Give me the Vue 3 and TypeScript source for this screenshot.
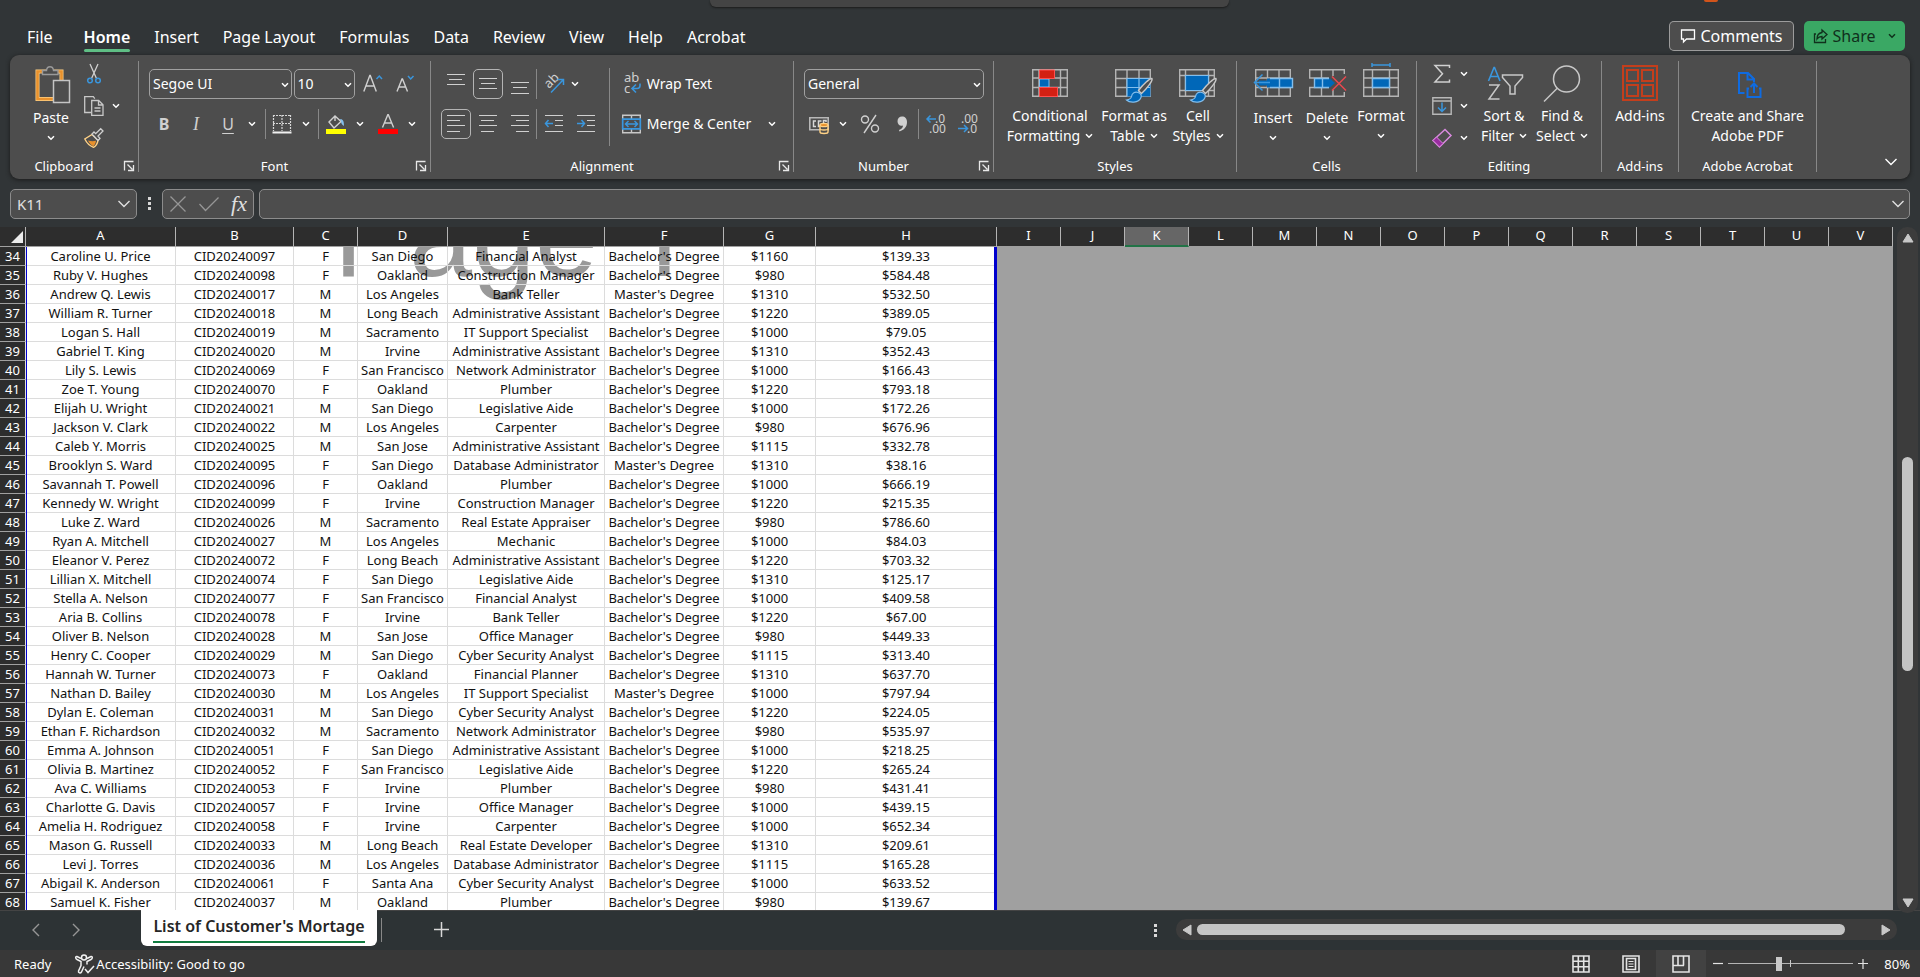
<script setup lang="ts">
import { h, ref } from 'vue'

type Row = [string, string, string, string, string, string, string]

const menu = ['File', 'Home', 'Insert', 'Page Layout', 'Formulas', 'Data', 'Review', 'View', 'Help', 'Acrobat']
const activeMenu = ref('Home')

const columns = 'ABCDEFGHIJKLMNOPQRSTUV'.split('')
const activeColumn = 'K'
const firstRow = 34
const formula = ref('')
const cellName = ref('K11')
const zoom = ref(40)

const B = "Bachelor's Degree"
const M = "Master's Degree"

// name, customer number suffix, sex, city, occupation, income, mortgage
const people: Row[] = [
  ['Caroline U. Price', '097', 'F', 'San Diego', 'Financial Analyst', '$1160', '$139.33'],
  ['Ruby V. Hughes', '098', 'F', 'Oakland', 'Construction Manager', '$980', '$584.48'],
  ['Andrew Q. Lewis', '017', 'M', 'Los Angeles', 'Bank Teller', '$1310', '$532.50'],
  ['William R. Turner', '018', 'M', 'Long Beach', 'Administrative Assistant', '$1220', '$389.05'],
  ['Logan S. Hall', '019', 'M', 'Sacramento', 'IT Support Specialist', '$1000', '$79.05'],
  ['Gabriel T. King', '020', 'M', 'Irvine', 'Administrative Assistant', '$1310', '$352.43'],
  ['Lily S. Lewis', '069', 'F', 'San Francisco', 'Network Administrator', '$1000', '$166.43'],
  ['Zoe T. Young', '070', 'F', 'Oakland', 'Plumber', '$1220', '$793.18'],
  ['Elijah U. Wright', '021', 'M', 'San Diego', 'Legislative Aide', '$1000', '$172.26'],
  ['Jackson V. Clark', '022', 'M', 'Los Angeles', 'Carpenter', '$980', '$676.96'],
  ['Caleb Y. Morris', '025', 'M', 'San Jose', 'Administrative Assistant', '$1115', '$332.78'],
  ['Brooklyn S. Ward', '095', 'F', 'San Diego', 'Database Administrator', '$1310', '$38.16'],
  ['Savannah T. Powell', '096', 'F', 'Oakland', 'Plumber', '$1000', '$666.19'],
  ['Kennedy W. Wright', '099', 'F', 'Irvine', 'Construction Manager', '$1220', '$215.35'],
  ['Luke Z. Ward', '026', 'M', 'Sacramento', 'Real Estate Appraiser', '$980', '$786.60'],
  ['Ryan A. Mitchell', '027', 'M', 'Los Angeles', 'Mechanic', '$1000', '$84.03'],
  ['Eleanor V. Perez', '072', 'F', 'Long Beach', 'Administrative Assistant', '$1220', '$703.32'],
  ['Lillian X. Mitchell', '074', 'F', 'San Diego', 'Legislative Aide', '$1310', '$125.17'],
  ['Stella A. Nelson', '077', 'F', 'San Francisco', 'Financial Analyst', '$1000', '$409.58'],
  ['Aria B. Collins', '078', 'F', 'Irvine', 'Bank Teller', '$1220', '$67.00'],
  ['Oliver B. Nelson', '028', 'M', 'San Jose', 'Office Manager', '$980', '$449.33'],
  ['Henry C. Cooper', '029', 'M', 'San Diego', 'Cyber Security Analyst', '$1115', '$313.40'],
  ['Hannah W. Turner', '073', 'F', 'Oakland', 'Financial Planner', '$1310', '$637.70'],
  ['Nathan D. Bailey', '030', 'M', 'Los Angeles', 'IT Support Specialist', '$1000', '$797.94'],
  ['Dylan E. Coleman', '031', 'M', 'San Diego', 'Cyber Security Analyst', '$1220', '$224.05'],
  ['Ethan F. Richardson', '032', 'M', 'Sacramento', 'Network Administrator', '$980', '$535.97'],
  ['Emma A. Johnson', '051', 'F', 'San Diego', 'Administrative Assistant', '$1000', '$218.25'],
  ['Olivia B. Martinez', '052', 'F', 'San Francisco', 'Legislative Aide', '$1220', '$265.24'],
  ['Ava C. Williams', '053', 'F', 'Irvine', 'Plumber', '$980', '$431.41'],
  ['Charlotte G. Davis', '057', 'F', 'Irvine', 'Office Manager', '$1000', '$439.15'],
  ['Amelia H. Rodriguez', '058', 'F', 'Irvine', 'Carpenter', '$1000', '$652.34'],
  ['Mason G. Russell', '033', 'M', 'Long Beach', 'Real Estate Developer', '$1310', '$209.61'],
  ['Levi J. Torres', '036', 'M', 'Los Angeles', 'Database Administrator', '$1115', '$165.28'],
  ['Abigail K. Anderson', '061', 'F', 'Santa Ana', 'Cyber Security Analyst', '$1000', '$633.52'],
  ['Samuel K. Fisher', '037', 'M', 'Oakland', 'Plumber', '$980', '$139.67'],
]
const masters = new Set([36, 45, 57])
const rows = people.map(([name, id, sex, city, job, income, mortgage], i) => {
  const number = firstRow + i
  return { number, cells: [name, 'CID20240' + id, sex, city, job, masters.has(number) ? M : B, income, mortgage] }
})

const Chevron = () =>
  h('svg', { width: 8, height: 6, viewBox: '0 0 8 6', 'aria-hidden': 'true' }, [
    h('path', { d: 'M1 1.2l3 3 3-3', fill: 'none', stroke: 'currentColor', 'stroke-width': 1.5 }),
  ])
const WideChevron = () =>
  h('svg', { width: 14, height: 8, viewBox: '0 0 14 8', 'aria-hidden': 'true' }, [
    h('path', { d: 'M1.5 1l5.5 5.5L12.5 1', fill: 'none', stroke: 'currentColor', 'stroke-width': 1.4 }),
  ])
const Launcher = () =>
  h('svg', { width: 12, height: 12, viewBox: '0 0 12 12', 'aria-hidden': 'true' }, [
    h('path', { d: 'M1.5 10.5V1.5h9M4.5 4.5l5 5M10.5 5v5.500H5', fill: 'none', stroke: '#e8e8e8', 'stroke-width': 1.3 }),
  ])
// Horizontal strokes given as [x1, x2, y]
const Lines = (props: { lines: number[][] }) =>
  h('svg', { width: 20, height: 20, viewBox: '0 0 20 20', 'aria-hidden': 'true' }, [
    h('path', { d: props.lines.map(([a, b, y]) => `M${a} ${y}H${b}`).join(''), stroke: '#d0d0d0', 'stroke-width': 1.2 }),
  ])
Lines.props = ['lines']
const Brush = () =>
  h('g', [
    h('path', { d: 'M38 14.5c-2-.5-9 6-13.5 12l3 3C33 24.5 39 16.5 38 14.5z', fill: '#4d4d4d', stroke: '#c8c8c8', 'stroke-width': 1.4 }),
    h('path', { d: 'M24 28.5c-3-1-6 .5-6.5 4-.4 2-2 3-5 3.500 3 3 12 3.500 14.500-2.500.8-2-.5-4-3-5z', fill: '#0067b8', stroke: '#83beec', 'stroke-width': 1.2 }),
  ])
</script>

<template>
  <div class="app">
    <header class="top">
      <div class="search" />
      <div class="avatar" />
      <nav class="menu">
        <button
          v-for="item in menu"
          :key="item"
          type="button"
          :class="{ active: item === activeMenu }"
          @click="activeMenu = item"
        >{{ item }}</button>
      </nav>
      <div class="actions">
        <button type="button" class="comments">
          <svg width="16" height="16" viewBox="0 0 16 16"><path d="M1.500 2h13v9H6.500L3.500 14v-3h-2z" fill="none" stroke="#fff" stroke-width="1.300" /></svg>
          Comments
        </button>
        <button type="button" class="share">
          <svg width="16" height="16" viewBox="0 0 16 16"><path d="M3 6H1.500v8.500h11V11M9 2l5 4.500L9 11V8.500C6.500 8.500 5 9.500 4 11c0-3.500 2-6 5-6.500z" fill="none" stroke="#10301c" stroke-width="1.300" /></svg>
          <span>Share</span>
          <Chevron />
        </button>
      </div>
    </header>

    <section class="ribbon">
      <div class="group clipboard">
        <div class="body start">
          <button type="button" class="big paste low">
            <svg width="40" height="40" viewBox="0 0 40 40">
              <path d="M6.500 7.500h24V35h-24z" fill="none" stroke="#ffd286" stroke-width="4" />
              <path d="M6.500 7.500h24V35h-24z" fill="none" stroke="#e8912d" stroke-width="2.600" />
              <path d="M11.500 10.500v-4h4c.5-5 6.500-5 7 0h4.500v4z" fill="#4d4d4d" stroke="#9a9a9a" stroke-width="1.400" />
              <path d="M22.500 16.500h16v22h-16z" fill="#4d4d4d" stroke="#c4c4c4" stroke-width="1.500" />
            </svg>
            <span>Paste</span><span><Chevron /></span>
          </button>
          <div class="mini">
            <button type="button" aria-label="Cut">
              <svg width="20" height="20" viewBox="0 0 20 20"><path d="M6 0l6.500 14.500M14 0L7.500 14.500" stroke="#d0d0d0" stroke-width="1.300" /><circle cx="6" cy="16.500" r="2.300" fill="none" stroke="#3a96dd" stroke-width="1.500" /><circle cx="14" cy="16.500" r="2.300" fill="none" stroke="#3a96dd" stroke-width="1.500" /></svg>
            </button>
            <button type="button" aria-label="Copy">
              <svg width="20" height="20" viewBox="0 0 20 20"><path d="M7 16.500H.7V.7h8.600l1.500 2M7.700 4.500h7l4.300 4.300v10.500H7.700zM14.500 4.500V9H19M10.500 12h6M10.500 15h6" fill="none" stroke="#c8c8c8" stroke-width="1.300" /></svg>
              <Chevron />
            </button>
            <button type="button" aria-label="Format Painter">
              <svg width="20" height="20" viewBox="0 0 20 20"><path d="M8 6.500L.8 11c2 4 5 7 8.700 8.300 3-1.500 4-4 4.500-7z" fill="#4d4d4d" stroke="#ffd286" stroke-width="1.400" /><path d="M4 12.500c3 1 5.500 1 8 .3-.3 2.500-1.300 4.500-2.700 5.500C7 17 5 15 4 12.500z" fill="#e8912d" /><path d="M8 6l6 6.500 2-2-2-2.500 5-5-2.300-2.300-5 5L10 4z" fill="#4d4d4d" stroke="#d0d0d0" stroke-width="1.300" /></svg>
            </button>
          </div>
        </div>
        <div class="label tucked">Clipboard<button type="button" aria-label="Clipboard options"><Launcher /></button></div>
      </div>

      <div class="group font">
        <div class="body rows">
          <div class="row">
            <span class="combo wide"><select aria-label="Font"><option>Segoe UI</option></select><Chevron /></span>
            <span class="combo"><select aria-label="Font size"><option>10</option></select><Chevron /></span>
            <button type="button" class="w32" aria-label="Increase font size">
              <svg width="20" height="20" viewBox="0 0 20 20"><path d="M.8 17.500L6.800 1.500h.5l6 16M3 12h8" fill="none" stroke="#d0d0d0" stroke-width="1.400" /><path d="M13.500 5L16.300 2 19 5" fill="none" stroke="#3a96dd" stroke-width="1.500" /></svg>
            </button>
            <button type="button" class="w32" aria-label="Decrease font size">
              <svg width="20" height="20" viewBox="0 0 20 20"><path d="M2 17.500L7 5h.5l5 12.500M4 13h7" fill="none" stroke="#d0d0d0" stroke-width="1.400" /><path d="M13 2l2.700 3L18.500 2" fill="none" stroke="#3a96dd" stroke-width="1.500" /></svg>
            </button>
          </div>
          <div class="row">
            <button type="button" class="w32 glyph bold">B</button>
            <button type="button" class="w32 glyph italic">I</button>
            <button type="button" class="w32 glyph under">U</button>
            <button type="button" class="w16" aria-label="Underline style"><Chevron /></button>
            <i class="bar roomy" />
            <button type="button" class="w24" aria-label="Borders">
              <svg width="20" height="20" viewBox="0 0 20 20"><path d="M1 1.500h18M1 9.500h18M1.500 1v16M10 1v16M18.500 1v16" stroke="#d8d8d8" stroke-width="1.200" stroke-dasharray="2 1" /><path d="M.5 18.500h19" stroke="#f0f0f0" stroke-width="2" /></svg>
            </button>
            <button type="button" class="w24" aria-label="Border style"><Chevron /></button>
            <i class="bar" />
            <button type="button" class="w32" aria-label="Fill color">
              <svg width="20" height="20" viewBox="0 0 20 20"><path d="M3 8l6-6 6 5.500-7 6.500zM9 2v5" fill="none" stroke="#d0d0d0" stroke-width="1.400" /><path d="M14 5c3 0 4 2 4 7-2-1-3-3-3-5z" fill="#83beec" /><path d="M0 15h20v5H0z" fill="#ff0" /></svg>
            </button>
            <button type="button" class="w16" aria-label="Fill colors"><Chevron /></button>
            <button type="button" class="w32 spaced" aria-label="Font color">
              <svg width="20" height="20" viewBox="0 0 20 20"><path d="M4.500 13.500L9.800.8h.5l5.300 12.700M6.500 9h7" fill="none" stroke="#d0d0d0" stroke-width="1.400" /><path d="M0 15h20v5H0z" fill="red" /></svg>
            </button>
            <button type="button" class="w16" aria-label="Font colors"><Chevron /></button>
          </div>
        </div>
        <div class="label tucked">Font<button type="button" aria-label="Font options"><Launcher /></button></div>
      </div>

      <div class="group alignment">
        <div class="body">
          <div class="rows left">
            <div class="row">
              <button type="button" class="w32" aria-label="Top align"><Lines :lines="[[1, 19, 0.5], [3, 16, 5.5], [1, 19, 10.5]]" /></button>
              <button type="button" class="w32 on" aria-label="Middle align"><Lines :lines="[[1, 19, 4.5], [3, 17, 9.5], [1, 19, 14.5]]" /></button>
              <button type="button" class="w32" aria-label="Bottom align"><Lines :lines="[[1, 19, 8.5], [3, 17, 13.5], [1, 19, 19.5]]" /></button>
              <i class="bar" />
              <button type="button" class="w32" aria-label="Orientation">
                <svg width="20" height="20" viewBox="0 0 20 20"><text transform="translate(5 15) rotate(-45)" font-size="13" fill="#d0d0d0">ab</text><path d="M7 18.500L19 6M13.500 5.500H19.500V11" fill="none" stroke="#3a96dd" stroke-width="1.500" /></svg>
              </button>
              <button type="button" class="w10" aria-label="Orientation options"><Chevron /></button>
            </div>
            <div class="row">
              <button type="button" class="w32 on" aria-label="Align left"><Lines :lines="[[1, 19, 1.5], [1, 14, 6.5], [1, 19, 11.5], [1, 14, 17.5]]" /></button>
              <button type="button" class="w32" aria-label="Center"><Lines :lines="[[1, 19, 1.5], [3, 16, 6.5], [1, 19, 11.5], [3, 16, 17.5]]" /></button>
              <button type="button" class="w32" aria-label="Align right"><Lines :lines="[[1, 19, 1.5], [6, 19, 6.5], [1, 19, 11.5], [6, 19, 17.5]]" /></button>
              <i class="bar" />
              <button type="button" class="w32" aria-label="Decrease indent">
                <svg width="20" height="20" viewBox="0 0 20 20"><path d="M1 1.500h18M11 6.500h8M11 11.500h8M1 17.500h18" stroke="#d0d0d0" stroke-width="1.200" /><path d="M9 9.500H1.500M4.500 6L1.500 9.500l3 3.500" fill="none" stroke="#3a96dd" stroke-width="1.500" /></svg>
              </button>
              <button type="button" class="w32" aria-label="Increase indent">
                <svg width="20" height="20" viewBox="0 0 20 20"><path d="M1 1.500h18M11 6.500h8M11 11.500h8M1 17.500h18" stroke="#d0d0d0" stroke-width="1.200" /><path d="M1 9.500h7.500M5.500 6l3 3.500-3 3.500" fill="none" stroke="#3a96dd" stroke-width="1.500" /></svg>
              </button>
            </div>
          </div>
          <div class="rows right">
            <div class="row">
              <button type="button" class="text">
                <svg width="24" height="22" viewBox="0 0 24 22"><text x="4" y="9" font-size="13" fill="#d0d0d0">ab</text><text x="4" y="20" font-size="13" fill="#d0d0d0">c</text><path d="M20 10.500v2q0 3-3 3h-4.500M16 11.500l-4 4 4 4" fill="none" stroke="#3a96dd" stroke-width="1.600" /></svg>
                Wrap Text
              </button>
            </div>
            <div class="row">
              <button type="button" class="text">
                <svg width="24" height="20" viewBox="0 0 24 20"><path d="M2.700 1.200h17.600v17.600H2.700zM11.500 1v4M11.500 15v4" fill="none" stroke="#c8c8c8" stroke-width="1.400" /><path d="M2.700 5.200h17.600v9.600H2.700z" fill="#4d4d4d" stroke="#3a96dd" stroke-width="1.700" /><path d="M6 10h11M8.500 7L5.500 10l3 3M14.500 7l3 3-3 3" fill="none" stroke="#3a96dd" stroke-width="1.500" /></svg>
                Merge &amp; Center
              </button>
              <button type="button" class="w24 push" aria-label="Merge options"><Chevron /></button>
            </div>
          </div>
        </div>
        <div class="label tucked">Alignment<button type="button" aria-label="Alignment options"><Launcher /></button></div>
      </div>

      <div class="group number">
        <div class="body rows">
          <div class="row">
            <span class="combo full"><select aria-label="Number format"><option>General</option></select><Chevron /></span>
          </div>
          <div class="row">
            <button type="button" class="w32" aria-label="Accounting format">
              <svg width="20" height="20" viewBox="0 0 20 20"><path d="M.8 3.800h18.400v12H.8z" fill="none" stroke="#b8b8b8" stroke-width="1.600" /><path d="M7 7H4.500v5.500H7M12.500 7H9.500v5.500h2M17 8V6.500h-2.500V9" fill="none" stroke="#d8d8d8" stroke-width="1.500" /><path d="M11 11v7c0 2 8 2 8 0v-7" fill="#4d4d4d" stroke="#ffd286" stroke-width="1.400" /><ellipse cx="15" cy="11" rx="4" ry="1.700" fill="#e8912d" stroke="#ffd286" stroke-width="1.300" /><path d="M11 14.500c0 2 8 2 8 0" fill="none" stroke="#ffd286" stroke-width="1.300" /></svg>
            </button>
            <button type="button" class="w16" aria-label="Currencies"><Chevron /></button>
            <button type="button" class="w32" aria-label="Percent style">
              <svg width="20" height="20" viewBox="0 0 20 20"><path d="M16 1L4 19" stroke="#d0d0d0" stroke-width="1.400" /><circle cx="5" cy="5.500" r="3.500" fill="none" stroke="#d0d0d0" stroke-width="1.400" /><circle cx="15" cy="14.500" r="3.500" fill="none" stroke="#d0d0d0" stroke-width="1.400" /></svg>
            </button>
            <button type="button" class="w32" aria-label="Comma style">
              <svg width="20" height="20" viewBox="0 0 20 20"><path d="M10 2.500c3 0 5 2 5 5.500 0 5-3 8-7.500 9.500L7 16c2.500-1 4-2.500 4-4.500-3 1-5.500-1-5.500-4.300 0-2.800 2-4.700 4.500-4.700z" fill="#d0d0d0" /></svg>
            </button>
            <i class="bar" />
            <button type="button" class="w32" aria-label="Increase decimal">
              <svg width="22" height="20" viewBox="0 0 22 20"><text x="10" y="9" font-size="12" fill="#d0d0d0">.0</text><text x="4" y="19" font-size="12" fill="#d0d0d0">.00</text><path d="M11 5H2M5.500 1.500L2 5l3.500 3.500" fill="none" stroke="#3a96dd" stroke-width="1.500" /></svg>
            </button>
            <button type="button" class="w32" aria-label="Decrease decimal">
              <svg width="22" height="20" viewBox="0 0 22 20"><text x="4" y="9" font-size="12" fill="#d0d0d0">.00</text><text x="10" y="19" font-size="12" fill="#d0d0d0">.0</text><path d="M1 14.500h9M7 11l3.500 3.500L7 18" fill="none" stroke="#3a96dd" stroke-width="1.500" /></svg>
            </button>
          </div>
        </div>
        <div class="label tucked">Number<button type="button" aria-label="Number options"><Launcher /></button></div>
      </div>

      <div class="group styles">
        <div class="body start">
          <button type="button" class="big cond">
            <svg width="40" height="40" viewBox="0 0 40 40"><path d="M2.700 5.700h34.600v26.600H2.700zM2 14h36M2 23.500h36M9 5v28M30.500 5v28" fill="none" stroke="#b4b4b4" stroke-width="1.400" /><path d="M9.500 15h9.500v8H9.500z" fill="#0067b8" stroke="#83beec" /><path d="M9.500 6H24.500v8.500h-15zM9.500 23.500h18v9h-18z" fill="#d32013" stroke="#ff5050" /></svg>
            <span>Conditional</span><span>Formatting <Chevron /></span>
          </button>
          <button type="button" class="big table">
            <svg width="40" height="40" viewBox="0 0 40 40"><path d="M1.700 5.700h34.600v26.600H1.700zM1 14.500h36M1 23.500h36M13 5v28M25 5v28" fill="none" stroke="#b4b4b4" stroke-width="1.400" /><path d="M13 14.500h23.500v18H13z" fill="#0067b8" /><path d="M13 23.500h23M13 32.500V14.500h23M25 14.500v18" fill="none" stroke="#83beec" stroke-width="1.200" /><Brush /></svg>
            <span>Format as</span><span>Table <Chevron /></span>
          </button>
          <button type="button" class="big cell">
            <svg width="40" height="40" viewBox="0 0 40 40"><path d="M1.700 5.700h34.600v26.600H1.700zM1 11.500h36M1 26.500h36M7.500 5v28M30.500 5v28" fill="none" stroke="#b4b4b4" stroke-width="1.400" /><path d="M7.500 11.500h23v15h-23z" fill="#0067b8" stroke="#83beec" stroke-width="1.200" /><Brush /></svg>
            <span>Cell</span><span>Styles <Chevron /></span>
          </button>
        </div>
        <div class="label">Styles</div>
      </div>

      <div class="group cells">
        <div class="body start">
          <button type="button" class="big w54 low">
            <svg width="40" height="40" viewBox="0 0 40 40"><path d="M2.700 5.700h34.600v26.600H2.700zM2 14h36M2 23.500h36M14.500 5v28M26 5v28" fill="none" stroke="#b4b4b4" stroke-width="1.400" /><path d="M14 14.500h25.500v9H14v-2H6v-5h8z" fill="#0067b8" /><path d="M17 14.500h22.500v9H17M26.500 14v10" fill="none" stroke="#83beec" stroke-width="1.400" /><path d="M17 18.500H1.500M9.500 10.500l-8 8 8 8" fill="none" stroke="#3a96dd" stroke-width="1.500" /></svg>
            <span>Insert</span><span><Chevron /></span>
          </button>
          <button type="button" class="big w54 low">
            <svg width="40" height="40" viewBox="0 0 40 40"><path d="M2.700 14V5.700h34.600V10M2 14h20M2.700 23.500v8.800h34.600V28M2 23.500h20M14.500 5v28M26 5v7M26 26v7" fill="none" stroke="#b4b4b4" stroke-width="1.400" /><path d="M7.500 14.500H23l5 4.500-5 4.500H7.500z" fill="#0067b8" /><path d="M22 14.500H7.500v9H22M15.500 14v10" fill="none" stroke="#83beec" stroke-width="1.400" /><path d="M25 12.500l14 14M39 12.500l-14 14" stroke="#e8484f" stroke-width="1.500" /></svg>
            <span>Delete</span><span><Chevron /></span>
          </button>
          <button type="button" class="big w54">
            <svg width="40" height="40" viewBox="0 0 40 40"><path d="M2.700 5.700h34.600v26.600H2.700zM2 14h36M2 23.500h36M11.500 5v28M28.500 5v28" fill="none" stroke="#b4b4b4" stroke-width="1.400" /><path d="M11.500 14.500h17v9h-17z" fill="#0067b8" stroke="#83beec" stroke-width="1.400" /><path d="M11 1h18M11 -1v4M29 -1v4" stroke="#3a96dd" stroke-width="1.500" /></svg>
            <span>Format</span><span><Chevron /></span>
          </button>
        </div>
        <div class="label">Cells</div>
      </div>

      <div class="group editing">
        <div class="body start">
          <div class="mini">
            <button type="button" aria-label="AutoSum">
              <svg width="20" height="20" viewBox="0 0 20 20"><path d="M17.500 4V1.500H3l7.500 8.300L3 18h14.500v-2.500" fill="none" stroke="#d0d0d0" stroke-width="1.500" /></svg>
              <Chevron />
            </button>
            <button type="button" aria-label="Fill">
              <svg width="20" height="20" viewBox="0 0 20 20"><path d="M.8 1.800h18.400v16.400H.8zM1 5h18" fill="none" stroke="#b8b8b8" stroke-width="1.400" /><path d="M10 6.500v9M6 11.500l4 4 4-4" fill="none" stroke="#3a96dd" stroke-width="1.500" /></svg>
              <Chevron />
            </button>
            <button type="button" aria-label="Clear">
              <svg width="20" height="20" viewBox="0 0 20 20"><path d="M13 1.500L19 7.500 7.500 19 1 12.500z" fill="none" stroke="#d98ade" stroke-width="1.500" /><path d="M4.500 9l6.500 6.500L7.500 19 1 12.500z" fill="#992da0" stroke="#d98ade" /></svg>
              <Chevron />
            </button>
          </div>
          <button type="button" class="big w58">
            <svg width="40" height="40" viewBox="0 0 40 40"><path d="M4.500 17L10 3.500h.5L16 17M6.500 12.500h7.500" fill="none" stroke="#3a96dd" stroke-width="1.600" /><path d="M5 21h10L5 35h10.500M18.500 11h20v2.500l-7.500 8.500v8h-5v-8l-7.500-8.500z" fill="none" stroke="#c8c8c8" stroke-width="1.500" /></svg>
            <span>Sort &amp;</span><span>Filter <Chevron /></span>
          </button>
          <button type="button" class="big w58">
            <svg width="40" height="40" viewBox="0 0 40 40"><circle cx="24.500" cy="15" r="13" fill="none" stroke="#c8c8c8" stroke-width="1.500" /><path d="M15.500 24L2 37.500" stroke="#c8c8c8" stroke-width="1.500" /></svg>
            <span>Find &amp;</span><span>Select <Chevron /></span>
          </button>
        </div>
        <div class="label">Editing</div>
      </div>

      <div class="group addins">
        <div class="body">
          <button type="button" class="big">
            <svg width="40" height="40" viewBox="0 0 40 40"><path d="M3 2h34v34H3zM7 6h11v11H7zM22 6h11v11H22zM7 21h11v11H7zM22 21h11v11H22z" fill="none" stroke="#c43e1c" stroke-width="2" /></svg>
            <span>Add-ins</span>
          </button>
        </div>
        <div class="label">Add-ins</div>
      </div>

      <div class="group adobe">
        <div class="body">
          <button type="button" class="big">
            <svg width="40" height="40" viewBox="0 0 40 40"><path d="M17.500 29h-5.500V9h9l6 6v3M20.500 9v6.500H27M22 24.500h-1.500v8.500h13v-8.500H32M27 29V20M23.500 23l3.500-3.500 3.500 3.500" fill="none" stroke="#0f6be0" stroke-width="2" /></svg>
            <span>Create and Share</span><span>Adobe PDF</span>
          </button>
        </div>
        <div class="label">Adobe Acrobat</div>
      </div>

      <button type="button" class="collapse" aria-label="Collapse ribbon"><WideChevron /></button>
    </section>

    <section class="formula">
      <div class="box name">
        <input v-model="cellName" type="text" aria-label="Cell name">
        <WideChevron />
      </div>
      <svg class="dots" width="4" height="14" viewBox="0 0 4 14"><path d="M0 0h3v3H0zM0 5h3v3H0zM0 10h3v3H0z" fill="#d8d8d8" /></svg>
      <div class="box tools">
        <button type="button" aria-label="Cancel"><svg width="18" height="18" viewBox="0 0 18 18"><path d="M1.500 1.500l15 15M16.500 1.500l-15 15" stroke="#969696" stroke-width="1.300" /></svg></button>
        <button type="button" aria-label="Enter"><svg width="22" height="18" viewBox="0 0 22 18"><path d="M1.500 9l6 6.500L20.500 2.500" fill="none" stroke="#969696" stroke-width="1.300" /></svg></button>
        <button type="button" class="fx">fx</button>
      </div>
      <div class="box entry">
        <input v-model="formula" type="text" aria-label="Formula">
        <WideChevron />
      </div>
    </section>

    <main class="sheet">
      <div class="grid">
        <div class="page"><span>Page <b>1</b></span></div>
        <table>
          <colgroup>
            <col class="c0"><col class="ca"><col class="cb"><col class="cc"><col class="cd"><col class="ce"><col class="cf"><col class="cg"><col class="ch">
            <col v-for="n in 14" :key="n" class="cx">
          </colgroup>
          <thead>
            <tr>
              <th class="corner"><svg width="12" height="12" viewBox="0 0 12 12"><path d="M12 0v12H0z" fill="#ececec" /></svg></th>
              <th v-for="c in columns" :key="c" :class="{ current: c === activeColumn }">{{ c }}</th>
            </tr>
          </thead>
          <tbody>
            <tr v-for="row in rows" :key="row.number">
              <th>{{ row.number }}</th>
              <td v-for="(cell, i) in row.cells" :key="i">{{ cell }}</td>
              <td colspan="14" class="outside" />
            </tr>
          </tbody>
        </table>
        <div class="edge" />
      </div>
      <div class="vscroll">
        <svg width="12" height="10" viewBox="0 0 12 10"><path d="M6 1l5 8H1z" fill="#c8c8c8" stroke="#c8c8c8" stroke-linejoin="round" /></svg>
        <div class="vtrack"><div class="vthumb" /></div>
        <svg width="12" height="10" viewBox="0 0 12 10"><path d="M6 9l5-8H1z" fill="#c8c8c8" stroke="#c8c8c8" stroke-linejoin="round" /></svg>
      </div>
    </main>

    <footer>
      <div class="tabs">
        <div class="arrows">
          <button type="button" aria-label="Previous sheet"><svg width="8" height="14" viewBox="0 0 8 14"><path d="M7 1L1 7l6 6" fill="none" stroke="#969696" stroke-width="1.400" /></svg></button>
          <button type="button" aria-label="Next sheet"><svg width="8" height="14" viewBox="0 0 8 14"><path d="M1 1l6 6-6 6" fill="none" stroke="#969696" stroke-width="1.400" /></svg></button>
        </div>
        <button type="button" class="tab"><span>List of Customer's Mortage</span></button>
        <i class="bar" />
        <button type="button" class="add" aria-label="New sheet"><svg width="15" height="15" viewBox="0 0 15 15"><path d="M7.500 0v15M0 7.500h15" stroke="#d8d8d8" stroke-width="1.500" /></svg></button>
        <svg class="dots" width="4" height="14" viewBox="0 0 4 14"><path d="M0 0h3v3H0zM0 5h3v3H0zM0 10h3v3H0z" fill="#d8d8d8" /></svg>
        <div class="hscroll">
          <svg width="10" height="12" viewBox="0 0 10 12"><path d="M1 6l8-5v10z" fill="#c8c8c8" stroke="#c8c8c8" stroke-linejoin="round" /></svg>
          <div class="htrack"><div class="hthumb" /></div>
          <svg width="10" height="12" viewBox="0 0 10 12"><path d="M9 6L1 1v10z" fill="#c8c8c8" stroke="#c8c8c8" stroke-linejoin="round" /></svg>
        </div>
      </div>
      <div class="status">
        <span>Ready</span>
        <button type="button" class="access">
          <svg width="20" height="20" viewBox="0 0 20 20"><path d="M6 4.500L2 2.500C0 2 .5 5 2 5.500l4 2v4L3.500 17c-.5 2 2 2.500 3 1L9 12.500M12 4.500l4-2c2-.5 1.500 2.500 0 3l-4 2v3M10 15l3 3.500 6-6.500" fill="none" stroke="#f0f0f0" stroke-width="1.500" /><circle cx="9" cy="3.500" r="2.500" fill="none" stroke="#f0f0f0" stroke-width="1.500" /></svg>
          Accessibility: Good to go
        </button>
        <div class="views">
          <button type="button" aria-label="Normal view"><svg width="18" height="18" viewBox="0 0 18 18"><path d="M1 1h16v16H1zM6.300 1v16M11.700 1v16M1 6.300h16M1 11.700h16" fill="none" stroke="#e4e4e4" stroke-width="1.600" /></svg></button>
          <button type="button" aria-label="Page layout view"><svg width="18" height="18" viewBox="0 0 18 18"><path d="M1 1h16v16H1zM4.500 3.500h9v11h-9z" fill="none" stroke="#e4e4e4" stroke-width="1.600" /><path d="M6.500 6.500h5M6.500 9h5M6.500 11.500h5" stroke="#e4e4e4" stroke-width="1.200" /></svg></button>
          <button type="button" class="on" aria-label="Page break preview"><svg width="18" height="18" viewBox="0 0 18 18"><path d="M1 1h16v16H1zM6 1v9.500M11.500 1v9.500M1 10.500h11" fill="none" stroke="#e4e4e4" stroke-width="1.600" /></svg></button>
        </div>
        <button type="button" class="w20" aria-label="Zoom out"><svg width="10" height="10" viewBox="0 0 10 10"><path d="M0 4.500h10" stroke="#e4e4e4" stroke-width="1.200" /></svg></button>
        <div class="slider"><input v-model="zoom" type="range" min="0" max="100" aria-label="Zoom"></div>
        <button type="button" class="w20" aria-label="Zoom in"><svg width="10" height="10" viewBox="0 0 10 10"><path d="M0 4.500h10M5 0v10" stroke="#e4e4e4" stroke-width="1.200" /></svg></button>
        <span class="percent">80%</span>
      </div>
    </footer>
  </div>
</template>

<style>
body { background: #313537; }
</style>

<style scoped>
.app {
  display: flex; flex-direction: column; height: 100vh; overflow: hidden;
  background: #313537; color: #fff;
  font: 14px/20px "Noto Sans", "Open Sans", sans-serif;
}
button, input, select { font: inherit; color: inherit; background: none; border: 0; padding: 0; margin: 0; }
button { display: flex; align-items: center; justify-content: center; white-space: nowrap; }
svg { display: block; flex: none; overflow: visible; }

.top { position: relative; display: flex; justify-content: space-between; height: 55px; flex: none; }
.search { position: absolute; top: 0; left: 37%; right: 36%; height: 7px; background: #444; border-radius: 0 0 6px 6px; box-shadow: 0 1px 2px #1c1c1c; }
.avatar { position: absolute; top: 0; right: 202px; width: 14px; height: 2px; background: #d2541b; border-radius: 0 0 7px 7px; }
.menu { display: flex; align-items: flex-end; padding: 0 0 3px 15px; }
.menu button { position: relative; height: 34px; padding: 4px 12px 0; font-size: 16px; }
.menu button:first-child { margin-right: 7px; }
.menu .active { font-weight: 600; }
.menu .active::after { content: ""; position: absolute; left: 12px; right: 12px; bottom: 0; height: 3px; border-radius: 2px; background: #5fbf85; }
.actions { display: flex; gap: 10px; padding: 21px 15px 4px 0; }
.actions button { height: 30px; border-radius: 5px; font-size: 16px; gap: 4px; }
.comments { width: 125px; background: #4d4d4d; box-shadow: inset 0 0 0 1px #9c9c9c; }
.actions .share { width: 101px; background: #3aa864; color: #10301c; }
.share span { margin-right: 9px; }

.ribbon {
  display: flex; flex: none; height: 111px; margin: 0 10px; padding: 6px 0 7px;
  background: #4d4d4d; border-radius: 9px; box-shadow: 0 1px 4px #1a1a1a;
}
.group { display: flex; flex-direction: column; flex: none; border-right: 1px solid #888; box-sizing: border-box; }
.clipboard { width: 129px; }
.font { width: 292px; }
.alignment { width: 363px; }
.number { width: 200px; }
.styles { width: 243px; }
.cells { width: 180px; }
.editing { width: 185px; }
.addins { width: 77px; }
.adobe { width: 138px; }
.body { display: flex; flex: 1; justify-content: center; }
.body.start { justify-content: flex-start; }
.rows { display: flex; flex-direction: column; justify-content: flex-start; gap: 10px; padding: 8px 9px 0; }
.row { display: flex; align-items: center; height: 30px; }
.label { position: relative; height: 14px; font-size: 13px; line-height: 16px; text-align: center; }
.label.tucked { padding-right: 20px; }
.label button { position: absolute; right: 3px; top: 2px; }

.w10 { width: 10px; }
.w16 { width: 16px; }
.w20 { width: 20px; }
.w24 { width: 24px; }
.w32 { width: 32px; }
.w54 { width: 54px; }
.w58 { width: 58px; }
.row button { height: 30px; flex: none; }
.row .text { flex: none; }
.spaced { margin-left: 4px; }
.bar { width: 1px; height: 30px; background: #888; flex: none; margin-right: 1px; }
.bar.roomy { margin: 0 4px 0 5px; }
.on { position: relative; }
.row .on::before { content: ""; position: absolute; inset: 0 1px; border: 1px solid #b4b4b4; border-radius: 5px; }
.combo { position: relative; width: 62px; height: 30px; margin-right: 2px; }
.combo.wide { width: 144px; margin-left: 1px; }
.combo.full { width: 180px; margin: 0 0 0 1px; }
.combo select { appearance: none; width: 100%; height: 30px; padding-left: 3px; border: 1px solid #a0a0a0; border-radius: 5px; }
.combo svg { position: absolute; right: 3px; top: 13px; pointer-events: none; }
.glyph { font-size: 18px; color: #d0d0d0; }
.bold { font-weight: 700; font-size: 16px; }
.italic { font-family: "Liberation Serif", serif; font-style: italic; }
.under { font-size: 16px; text-decoration: underline; text-underline-offset: 3px; text-decoration-thickness: 1px; }
.number .rows { padding-right: 0; }
.number .row { justify-content: flex-start; }
.number .w16 { margin-right: 3px; }
.left { width: 160px; padding-right: 9px; }
.right { position: relative; flex: 1; padding: 8px 9px 0 11px; }
.right::before { content: ""; position: absolute; left: 0; top: 7px; bottom: 12px; width: 1px; background: #888; }
.text { gap: 3px; }
.push { margin-left: 9px; }

.big { flex-direction: column; justify-content: flex-start; align-items: center; padding-top: 3px; }
.big > svg { margin-bottom: 2px; }
.big.low > svg { margin-bottom: 4px; }
.big span { display: flex; align-items: center; gap: 5px; height: 20px; }
.paste { width: 64px; margin-left: 9px; }
.cond { width: 100px; margin-left: 6px; }
.table { width: 68px; }
.cell { width: 60px; }
.cells .body { padding-left: 9px; }
.mini { display: flex; flex-direction: column; gap: 12px; padding-top: 3px; width: 40px; }
.mini button { height: 20px; gap: 8px; justify-content: flex-start; }
.clipboard .mini { margin-left: 1px; }
.editing .mini { margin-left: 15px; width: 43px; }
.collapse { align-self: flex-end; margin: 0 12px 6px auto; }

.formula { display: flex; flex: none; align-items: center; gap: 5px; padding: 10px 10px 8px; }
.box { display: flex; align-items: center; height: 30px; box-sizing: border-box; background: #4d4d4d; border: 1px solid #8c8c8c; border-radius: 5px; color: #e0e0e0; }
.box input { flex: 1; min-width: 0; outline: 0; }
.name { width: 127px; padding: 0 5px 0 6px; font-size: 15px; }
.formula .dots { margin: 0 5px 0 6px; }
.tools { width: 92px; justify-content: space-between; padding: 0 6px; }
.fx { font: italic 22px/24px "Liberation Serif", serif; }
.entry { flex: 1; padding: 0 4px; }

.sheet { display: flex; flex: 1; min-height: 0; }
.grid { position: relative; flex: 1; overflow: hidden; background: #a0a0a0; }
.page, .edge { position: absolute; left: 26px; top: 20px; bottom: 0; width: 971px; }
.page { overflow: hidden; background: #fff; }
.edge { border: solid #0000cd; border-width: 0 3px 0 1px; box-sizing: border-box; pointer-events: none; }
.page span { position: absolute; left: 308px; top: -66px; font: 113px/1 "Liberation Sans", Arial, sans-serif; color: #999; white-space: nowrap; }
.page b { font-family: Roboto, sans-serif; font-weight: 400; }
table { position: relative; table-layout: fixed; width: 1893px; border-collapse: separate; border-spacing: 0; font-size: 13px; line-height: 18px; }
.c0 { width: 26px; }
.ca { width: 150px; }
.cb { width: 118px; }
.cc { width: 64px; }
.cd { width: 90px; }
.ce { width: 157px; }
.cf { width: 119px; }
.cg { width: 92px; }
.ch { width: 181px; }
.cx { width: 64px; }
th, td { height: 18px; padding: 0; text-align: center; font-weight: 400; white-space: nowrap; }
th { background: #2d2d2d; }
thead th { height: 19px; line-height: 17px; vertical-align: top; border-right: 1px solid #b4b4b4; border-bottom: 1px solid #a0a0a0; }
thead .current { background: #666; border-bottom: 2px solid #217346; height: 18px; }
.corner svg { margin: 4px 2px 0 auto; }
tbody th { border-right: 1px solid #e0e0e0; border-bottom: 1px solid #a0a0a0; }
td { color: #111; border-right: 1px solid #dcdcdc; border-bottom: 1px solid #dcdcdc; }
.outside { border: 0; }

.vscroll { display: flex; flex-direction: column; align-items: center; width: 21px; margin: 0 2px -3px 4px; padding: 6px 0 5px; box-sizing: border-box; background: #3c3c3c; border-radius: 10px; position: relative; z-index: 1; }
.vtrack { flex: 1; margin: 6px 0; width: 11px; display: flex; flex-direction: column; }
.vtrack::before { content: ""; flex: 208; }
.vtrack::after { content: ""; flex: 221; }
.vthumb { flex: 214; border-radius: 6px; background: #c4c4c4; }

footer { flex: none; }
.tabs { display: flex; height: 39px; background: #2d3335; border-top: 1px solid #444; }
.arrows { display: flex; gap: 32px; padding: 0 0 2px 32px; width: 109px; }
.tab { align-self: flex-start; height: 36px; min-width: 236px; margin-top: -1px; padding: 0 10px; background: #fff; color: #262626; font-size: 16px; font-weight: 600; border-radius: 0 0 6px 6px; }
.tab span { height: 28px; line-height: 26px; border-bottom: 2px solid #107c41; }
.tabs .bar { height: 24px; margin: 7px 0 0 4px; }
.add { margin-left: 52px; padding-bottom: 2px; }
.tabs .dots { margin: 13px 18px 0 auto; }
.hscroll { display: flex; align-items: center; width: 721px; height: 21px; margin: 8px 23px 0 0; padding: 0 6px; box-sizing: border-box; background: #3c3c3c; border-radius: 10px; }
.htrack { flex: 1; display: flex; margin: 0 5px; }
.htrack::after { content: ""; flex: 31; }
.hthumb { flex: 648; height: 11px; border-radius: 6px; background: #c4c4c4; }
.status { display: flex; align-items: center; height: 27px; padding: 0 10px 0 14px; background: #383838; font-size: 13px; }
.access { margin-left: 24px; gap: 1px; }
.views { display: flex; margin-left: auto; margin-right: 2px; align-self: stretch; }
.views button { width: 50px; }
.views .on { background: #424242; }
.slider { width: 125px; height: 20px; background: linear-gradient(#c8c8c8, #c8c8c8) 62px 50% / 1px 7px no-repeat, linear-gradient(#b4b4b4, #b4b4b4) 0 50% / 100% 1px no-repeat; }
.slider input { appearance: none; display: block; width: 100%; height: 20px; }
.slider input::-webkit-slider-thumb { appearance: none; width: 6px; height: 14px; background: #c8c8c8; }
.percent { margin-left: 11px; }
</style>
